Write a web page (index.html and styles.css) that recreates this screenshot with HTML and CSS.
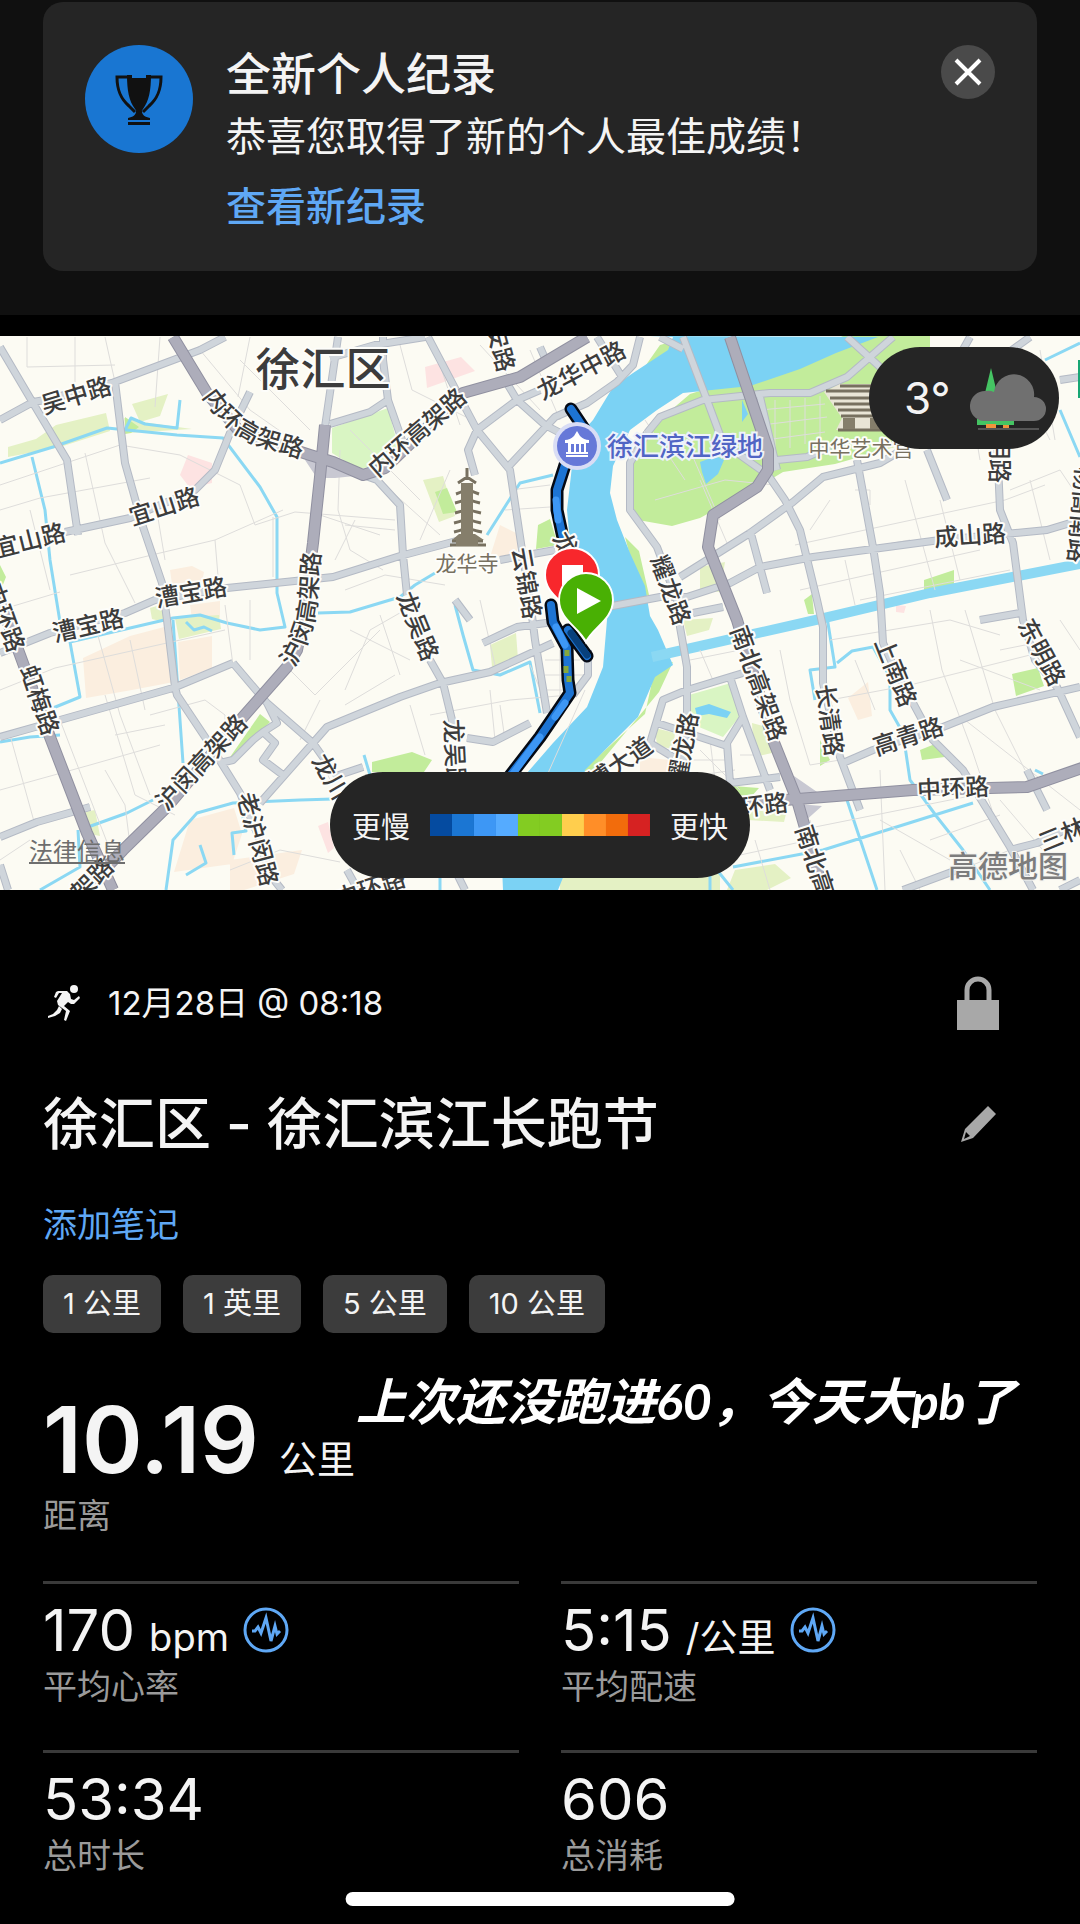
FILE: index.html
```html
<!DOCTYPE html>
<html lang="zh-CN">
<head>
    <meta charset="UTF-8">
    <meta name="viewport" content="width=device-width, initial-scale=1.0">
    <title>徐汇区 - 徐汇滨江长跑节</title>
    <link rel="stylesheet" href="styles.css">
</head>
<body>
    <section class="banner">
        <div class="record-card">
            <div class="trophy">
                <svg viewBox="0 0 108 108" aria-hidden="true">
                    <path d="M42 30h5v3h14v-3h5c0 15-2 26-8 34l-2 3h-4l-2-3c-6-8-8-19-8-34z"/>
                    <path class="handles" d="M45 32H32c0 14 4 22 12 29l6 6M63 32h13c0 14-4 22-12 29l-6 6"/>
                    <path d="M51 66h6c0 4 3 6 8 7v2H43v-2c5-1 8-3 8-7zM43 77h22v3H43z"/>
                </svg>
            </div>
            <div class="record-text">
                <h2>全新个人纪录</h2>
                <p>恭喜您取得了新的个人最佳成绩！</p>
                <a href="#records">查看新纪录</a>
            </div>
            <button class="close" type="button" aria-label="关闭">
                <svg viewBox="0 0 54 54"><path d="M15 15l24 24M39 15L15 39"/></svg>
            </button>
        </div>
    </section>

    <section class="map">
        <svg class="map-canvas" viewBox="0 336 1080 554">
            <rect class="land" x="0" y="336" width="1080" height="554"/>

            <!-- blocks -->
            <g class="built">
                <path d="M83 658l47-22 38-10 6 56-42 8-46 8zM178 642l34-6v32l-32 12zM170 570l22-4 12 6-2 10-30 2zM190 605l30-4v16l-28 2zM190 820l44-12 8 26-10 30-58 8zM230 860l72-10-8 24-50 16h-14zM500 525l20 10-4 20-26 2zM848 698l20-16 4 34-14 4zM640 757l30 3-6 30-24-10zM345 384l5-4z"/>
            </g>
            <g class="rosy">
                <path d="M188 455l24 8v20l-22 5-10-13zM425 367l36-10 14 14-48 17zM318 826l10-4 6 26-6 5zM896 605l10 1-2 7-8-1z"/>
            </g>
            <g class="pale-park">
                <path d="M8 447l28-8 20-14 50-12 4 18-50 16-52 10zM132 404l36-10-8 22-20 6zM124 418l18 4 50 7-66 4zM175 618l44-3 2 14-42 10zM85 812l10-2 5 26-10-2zM150 608l14-4v18l-12-3zM423 480l20-4 12 40-16 6zM490 645l26-12 2 26-26 8zM560 862l60 10-10 18h-50zM683 620l30-2-4 12-22 6zM752 723l22 6-2 24-18 4zM735 870l40-6 16 14-24 12h-40zM610 872h110v18H610zM700 567l25-5-5 30-20-2zM655 728l20 5-2 16-16-3zM738 808l48 6-2 8-36-2z"/>
            </g>
            <g class="park">
                <path d="M332 428l56-20 10 38-12 18-28 5-26-16zM689 695l42-12 10 32-18 22-36-15z"/>
            </g>
            <g class="green">
                <path d="M228 760l32-46 10 8-20 22-14 14zM125 417l14 10-8 6-6 1zM435 492l12-4 10 24-14 2zM538 525l12-6 8 26-22 4zM372 762l40-10 20 8-8 12h-52zM660 345l14-4-12 20-16 4zM625 537l14 14 10 44-8 2zM655 668l18-6-14 30-68 82-8-4 62-56zM924 580l30-10v16l-30 8zM1012 674l26-6 6 18-28 10zM920 750l20-8 12 14-30 4zM820 740l10 20-10 6zM804 600l8-6 2 20h-6zM0 565l6 12-6 15zM733 786l26 2-8 9-18-2z"/>
                <path d="M690 394l67-21 50-20 36-17h87v80l-25 28-70 20-52 8-20 12-63 34-28 8-34-6-8-22 4-38 16-27 20-22z"/>
            </g>

            <!-- water -->
            <path class="river" d="M650 336l23 1-5 13-35 23-20 14-20 33-18 20-8 70 3 33 17 27 21 30-1 20-4 47-16 40-34 36-26 30-27 47 3 70h55l12-30 15-90 53-53 17-40 18-12-15-35-8-14-5-30-15-33-13-33-7-27 3-27 17-36 27-20 26-17 67-7 50-17 36-16 42-16z"/>
            <path class="river" d="M700 462l16-6 8 4-6 14-12 10-4-12zM742 400l6 14-6 8zM695 708l14-4 22 8-4 6-18-4-12 2zM690 385l16-8 10 6-14 10z"/>
            <path class="canal" d="M652 657l88-20 80-18 110-26 155-30"/>
            <g class="streams">
                <path d="M0 463l53-16 54-19 70 7 46 3 37 49 17 30v76l8 34-25 3-33-7-27-8-27 3-103 24 10 55-27 11"/>
                <path d="M125 430l6-12 14 6 32 4 3-28M32 457l13 53 5 50 10 62M318 613l32-1 50-15 15-12 20-12M173 620l10 143M88 827l39-14 26-13M78 830l2 37-40 23M0 742l30-5 30-2M166 890l7-50 24-27 36-10 67-3 33-1M240 803l6 28-14 2 2 22M200 845l6 18-20 12M553 475l-33 8-33 52M455 605l8 30 10 35 27 5 30-13 10 51M827 617l8 50-25 3 5 30M837 663l15-12 21-4 17 30v33l13 23 7 47 27 37 26 33 27 40M733 867l90-17 150-47M847 800l30 90M1045 360l35-17M1060 410l20 47M1035 770l8 4M364 755l6 20M733 890l-24-30M440 860v30M186 622l8 8 10-3 8 4M710 875v15"/>
            </g>

            <!-- small streets -->
            <g class="lanes">
                <path d="M27 337v30l88-2M75 337v45M160 337l-5 70M200 350l50 60 50 35M250 337l-12 60M240 360l70 70M105 337l10 45M0 485l60-20 60-20 60 10 60 30 15 40 40-13 100 8M30 510l20 80M85 453l20 90 30 60M0 510l40-12 110-20M70 575l90-22 55-13 68-30M155 500l10 60M215 540l5 60M273 517v60M340 450l-2 60 12 40 33 20M320 515l60 20M355 520l-20 40"/>
                <path d="M0 610l60-18M0 690l55-22 170-38M95 625l25 90 30 80M130 640l15 70M60 720l50 130M105 695l30 100 40 20M10 735l25 90M150 715l55-15 20 15v30M115 735l50-10M105 770l20 35 5 40M0 790l90-25 70-20M225 605l8 60M250 600v60M290 670l25 25 65-65M345 705l50-30M300 740l20-40M0 860l30-20M230 870l50-20 60 12M380 615l20 60M410 705l15 50M320 755l12 30"/>
                <path d="M345 590l40-15 60 10M350 630l60 30M345 690l25-60 35-20M480 600l15 65M350 430l70 70M390 490l50 45M420 540l30-70M345 525l50 5M440 365l20 60M400 345l12 45 60 30M480 345l60 65M530 350l30 70M510 490l40-5M505 510l45-3M430 715l80-15 60-5M490 690l5 50M400 800l80-25M530 665l25 60M545 660h35M545 675h40M545 690h35M560 650v50M500 705l5 35M545 780l40-90"/>
                <path d="M760 410l65-6M762 425l65-8M765 440l60-8M775 400v50M790 400v48M805 398v46M820 396v42M655 500l70-20 50 5M690 450l30 70M700 480l30 70M645 420l40 60M795 545l70-15 140-30 40-15M800 560l110-20M800 590l180-40M830 500l-20 30M860 600l150-30M905 480l30 110M940 500l20 80M1010 490l50-20 20 30M1030 480l20 80M845 560l10 45M855 490h15v15M970 400l10 60M1020 380l30 60M1040 350l15 90"/>
                <path d="M780 650l10 50 20 65 30-5M830 640l120-20 50 15M830 700l80-15 140-35M855 660l20 50M930 610l12 60 30 80 20 60M965 610l30 100 30 60M880 770l5 120M810 820l10 60M800 830l100-20 150-30M960 870l50-20M900 850l20 40M1060 620l20 30M1000 650l50-10M960 660l80 30M700 650l15 35M690 660l50-10M700 750l40 40M690 760h40M700 775l35-5M710 740l5 40M750 740l20 60M740 755h20M755 840l15 50M740 855l70-15M965 720l115 90M1000 800l60 70M880 820l70 40M930 840l70-25"/>
            </g>

            <!-- main streets -->
            <g class="streets">
                <path id="st" d="M0 347l33 56 34 57 11 75M0 420l33-18 12-2 67-17 88-33 25-13M115 382l10 81 18 64 19 56 5 37 8 67 2 8 30 45 33 53 17 40 13 42 12 15M65 532l65-14 65-28 20-20 15-37 20-41M338 337l-13 90M330 424l40-12 18-12-5-40V337M388 400l14 40M330 358l45-13 50-8M428 337l49 93 33 40 12 80 8 50 5 40 12 73M477 430l-9 20 7 25M477 430l40-30 23-10M508 385l9 15 28 25 25 13M508 467l47-50 32-14 30-21 16-17 7-28M597 337l25 40M540 347l8 18M363 475l14 5 23 25 3 50 4 40M0 653l50-20 75-20 30-13 72-12 106-11 67-21 60-16M500 560l55-10M260 803l53-60 14-16 73-30 40-14 50-11 63-29M455 600l15 20M483 643l34-16 36-5M430 660l13 23 9 37v20M467 738l26 4 37-19M233 663l34 40 46 40 14 20M0 737l60-17 113-32 60-25M0 837l37-15 53-15M220 763l13-3 20-20 10-8 12 11-12 17 20 15M267 703l10 20-14 9M0 865l8 25M333 777l30-10M347 870l11 20M455 870l10 20M683 337l24 63 16 43 45 32 17 25 15 30 17 70 6 27v56l17 74 20 53M660 337l23 12M760 397l17 73M847 337l33 30M647 433l13-16 43-17 67-7h40l37-16 46-40M647 433l-17 30v47l27 37 20 53 3 27 7 40v46l-7 77M777 460l30-3 23-10M680 577l70-44 43-31 30-25 57-14 17-10M750 530l17 63M607 607l53-10 27 0 43-14 30-16 53-10 127-17 107-10 33-10M857 460l16 87 7 46 3 50 17 37 13 23 20 37 30 30 47 77 23 43M927 450l20 50M997 440l3 70 13 33 10 77 12 40 22 27 23 50M960 355l10-18M1005 355l25-18M1060 380l20-3M650 743l13-43 24-10 56-17M730 677l13 40 27 73M743 717l-16 26 3 40 50-6M657 723l70 23M650 743l23 14M980 620l40-7M843 763l30-13 70-23 50-20 87-20M1027 770l20 40M903 890l54-20M1010 850l27-7 43-20M1060 890l20-10M573 695l15-20v-25M693 613l30-6"/>
                <use href="#st"/>
            </g>

            <!-- elevated roads -->
            <path class="ramp" d="M305 460l12 18h18l20-2-30-22zM794 776l26 18-24 6zM798 804l24 2-18 16z"/>
            <g class="highways">
                <path id="hw" d="M173 337l34 56 33 39 70 23 23 7 30 13 22-7 78-75 57-16 67-40M325 425l-5 52-7 66-10 77-6 30-10 17-44 50-76 90-44 43-38 40M-8 580l28 75 30 82 37 96 26 57M730 337l38 113v20l-11 17-44 28-5 32 29 73 36 120 24 60 26 90M660 816l125-16 128-10 114-3 55-19"/>
                <use href="#hw"/>
            </g>

            <!-- landmarks -->
            <g class="pagoda">
                <path d="M467 468v12M458 483l9-6 9 6M456 494q11-4 11-7 0 3 12 7M455 503q12-3 12-6 0 3 13 6M455 513q12-3 12-6 0 3 14 6M454 523q13-3 13-6 0 3 14 6M454 532q13-3 13-6 0 3 15 6M452 541h31M450 545h36"/>
                <path class="solid" d="M461 483h12v55h-12zM452 540l7-6h16l9 6zM456 540h22v6h-22z"/>
            </g>
            <g class="palace">
                <path class="backing" d="M840 384h60v46h-64l6-12-18-26z"/>
                <path d="M840 386h60M826 391h70M830 398h66M834 404h60M838 410h60M841 416h60M838 430h60"/>
                <path class="solid" d="M843 418h12v11h-12zM870 418h12v11h-12z"/>
            </g>

            <!-- street names -->
            <g class="names">
                <text class="district" transform="translate(323 370)" dy="16">徐汇区</text>
                <text transform="translate(76 395) rotate(-17)" dy="9">吴中路</text>
                <text transform="translate(164 506) rotate(-18)" dy="9">宜山路</text>
                <text transform="translate(30 540) rotate(-14)" dy="9">宜山路</text>
                <text transform="translate(191 592) rotate(-10)" dy="9">漕宝路</text>
                <text transform="translate(88 625) rotate(-13)" dy="9">漕宝路</text>
                <path id="inner-ring" fill="none" d="M202 396q26 40 58 50 30 9 58 18"/>
                <text class="along"><textPath href="#inner-ring">内环高架路</textPath></text>
                <path id="humin" fill="none" d="M294 668q18-30 22-60 2-34 6-68"/>
                <text class="along"><textPath href="#humin">沪闵高架路</textPath></text>
                <text transform="translate(417 432) rotate(-41)" dy="9">内环高架路</text>
                <text transform="translate(201 762) rotate(-47)" dy="9">沪闵高架路</text>
                <text transform="translate(92 879) rotate(-45)" dy="9">架路</text>
                <text transform="translate(40 700) rotate(71)" dy="9">虹梅路</text>
                <text transform="translate(5 617) rotate(70)" dy="9">中环路</text>
                <text transform="translate(258 839) rotate(75)" dy="9">老沪闵路</text>
                <text transform="translate(337 787) rotate(60)" dy="9">龙川路</text>
                <text transform="translate(418 626) rotate(68)" dy="9">龙吴路</text>
                <text transform="translate(455 755) rotate(87)" dy="9">龙吴路</text>
                <text transform="translate(501 348) rotate(75)" dy="9">安路</text>
                <text transform="translate(581 370) rotate(-28)" dy="9">龙华中路</text>
                <text transform="translate(527 583) rotate(80)" dy="9">云锦路</text>
                <text transform="translate(671 590) rotate(70)" dy="9">耀龙路</text>
                <text transform="translate(683 748) rotate(-80)" dy="9">耀龙路</text>
                <text transform="translate(620 763) rotate(-35)" dy="9">博大道</text>
                <text transform="translate(1000 459) rotate(90)" dy="9">明路</text>
                <text transform="translate(970 535) rotate(-4)" dy="9">成山路</text>
                <text transform="translate(1081 515) rotate(95)" dy="9">杨高南路</text>
                <text transform="translate(896 672) rotate(68)" dy="9">上南路</text>
                <text transform="translate(830 720) rotate(82)" dy="9">长清路</text>
                <text transform="translate(1042 652) rotate(62)" dy="9">东明路</text>
                <text transform="translate(759 683) rotate(70)" dy="9">南北高架路</text>
                <text transform="translate(815 860) rotate(72)" dy="9">南北高</text>
                <text transform="translate(908 736) rotate(-18)" dy="9">高青路</text>
                <text transform="translate(953 788) rotate(-3)" dy="9">中环路</text>
                <text transform="translate(752 806) rotate(-7)" dy="9">中环路</text>
                <text transform="translate(1073 830) rotate(-22)" dy="9">三林路</text>
                <text transform="translate(370 888) rotate(-18)" dy="9">中环路</text>
                <text class="place" x="467" y="571">龙华寺</text>
                <text class="place" x="861" y="456">中华艺术宫</text>
            </g>

            <!-- route -->
            <g class="route">
                <path id="rt" d="M571 409l14 21-20 35-8 25v20l6 28M551 605l2 17 14 26 1 32 2 13-30 44-34 44M568 630l19 26"/>
                <use href="#rt" class="route-line"/>
                <path class="route-mid" d="M556 500l2 20M556 627l9 18M565 703l-10 14M540 737l-28 38"/>
                <path class="route-slow" d="M571 633l16 22"/>
                <path class="route-fast" d="M567 650v6M566 666v7M569 676v6"/>
            </g>
            <g class="names">
                <text transform="translate(566 544) rotate(60)" dy="9">龙</text>
            </g>

            <circle class="poi-halo" cx="577" cy="446" r="24"/>
            <circle class="poi" cx="577" cy="446" r="20"/>
            <path class="poi-glyph" d="M577 431l3 5q4 4 9 4v3h-3v9h2v2h-22v-2h2v-9h-3v-3q5 0 9-4zM571 444v8h3v-8zM576 444v8h3v-8zM581 444v8h3v-8zM566 455h22v2h-22z"/>
            <text class="poi-name" x="685" y="456">徐汇滨江绿地</text>

            <path class="pin-stop" d="M572 617c-6-16-27-22-27-42a27 27 0 0 1 54 0c0 20-21 26-27 42z"/>
            <path class="pin-glyph" d="M562 565h21v20h-21z"/>
            <path class="pin-start" d="M586 642c-6-14-27-22-27-42a27 27 0 0 1 54 0c0 20-21 28-27 42z"/>
            <path class="pin-glyph" d="M577 588l24 13-24 13z"/>
            <rect class="edge-sign" x="1078" y="360" width="4" height="38"/>

            <text class="provider" x="1008" y="877">高德地图</text>
        </svg>

        <div class="weather">
            <span>3°</span>
            <svg viewBox="0 0 78 64" aria-hidden="true">
                <path class="tree" d="M22 2l6 25H16zM8 53h37v6H8z"/>
                <path class="trunk" d="M17 58h10v4H17zM34 59h6v3h-6z"/>
                <path class="ground" d="M9 63h61"/>
                <path class="cloud" d="M15 55a15 15 0 0 1 2-30 14 14 0 0 1 8 1 20 20 0 0 1 40 5 12 12 0 0 1 0 24z"/>
            </svg>
        </div>
        <div class="legend">
            <span>更慢</span>
            <div class="scale">
                <i class="s1"></i><i class="s2"></i><i class="s3"></i><i class="s4"></i><i class="s5"></i><i class="s5"></i><i class="s6"></i><i class="s7"></i><i class="s8"></i><i class="s9"></i>
            </div>
            <span>更快</span>
        </div>
        <a class="legal" href="#legal">法律信息</a>
    </section>

    <main class="details">
        <div class="date-row">
            <svg class="runner" viewBox="0 0 36 38" aria-hidden="true">
                <circle cx="27" cy="5" r="4"/>
                <path d="M9 8l2-1h9l3 3 1 5 3 1 5-4 1 2-6 6h-3l-3-2-4 4 6 5-4 10-2-1 2-9-8-6-1-4 5-8h-3l-3 5-2-1z"/>
                <path d="M12 22l3 3-2 4-5 3-7 2 0-2 5-2 4-4z"/>
            </svg>
            <span>12月28日 @ 08:18</span>
            <button class="icon-button" type="button" aria-label="隐私">
                <svg viewBox="0 0 42 54"><path d="M0 24h42v30H0z"/><path class="shackle" d="M10 25V14a11 11 0 0 1 22 0v11"/></svg>
            </button>
        </div>

        <div class="title-row">
            <h1>徐汇区 - 徐汇滨江长跑节</h1>
            <button class="icon-button" type="button" aria-label="编辑">
                <svg viewBox="0 0 42 54"><path d="M31 9l8 8-23 24-12 4 4-13zM9 35l-2 7 6-3z" fill-rule="evenodd"/></svg>
            </button>
        </div>

        <a class="add-note" href="#note">添加笔记</a>

        <ul class="chips">
            <li>1 公里</li>
            <li>1 英里</li>
            <li>5 公里</li>
            <li>10 公里</li>
        </ul>

        <div class="distance">
            <p class="distance-value">10.19<small>公里</small></p>
            <p class="label">距离</p>
            <p class="caption">上次还没跑进60，今天大pb了</p>
        </div>

        <div class="stats">
            <div class="stat">
                <p class="value">170 <small>bpm</small>
                    <svg viewBox="0 0 46 46" aria-hidden="true"><circle cx="23" cy="23" r="21"/><path d="M9 24h3l3-4 3 6 5-15 5 23 4-15 2 8 3-3"/></svg>
                </p>
                <p class="label">平均心率</p>
            </div>
            <div class="stat">
                <p class="value">5:15 <small>/公里</small>
                    <svg viewBox="0 0 46 46" aria-hidden="true"><circle cx="23" cy="23" r="21"/><path d="M9 24h3l3-4 3 6 5-15 5 23 4-15 2 8 3-3"/></svg>
                </p>
                <p class="label">平均配速</p>
            </div>
            <div class="stat">
                <p class="value">53:34</p>
                <p class="label">总时长</p>
            </div>
            <div class="stat">
                <p class="value">606</p>
                <p class="label">总消耗</p>
            </div>
        </div>
    </main>
    <div class="home-bar"></div>
</body>
</html>
```

FILE: styles.css
```css
* {
    margin: 0;
    padding: 0;
    box-sizing: border-box;
}

body {
    font-family: Inter, "Noto Sans CJK SC", sans-serif;
    background-color: #000;
    color: #f4f4f4;
}

svg {
    display: block;
}

a {
    color: #5fa8f5;
    text-decoration: none;
}

button {
    border: none;
    background: none;
    cursor: pointer;
}

/* record banner */
.banner {
    background-color: #101010;
    padding: 2px 43px 44px;
}

.record-card {
    display: flex;
    align-items: flex-start;
    gap: 33px;
    padding: 43px 42px 39px;
    border-radius: 20px;
    background-color: #252525;
}

.trophy {
    width: 108px;
    height: 108px;
    border-radius: 50%;
    background-color: #1976d2;
    fill: #111;
}

.trophy .handles {
    fill: none;
    stroke: #111;
    stroke-width: 3px;
}

.record-text {
    flex: 1;
}

.record-text h2 {
    font-size: 45px;
    font-weight: 500;
    line-height: 60px;
}

.record-text p {
    font-size: 40px;
    line-height: 50px;
    margin-top: 7px;
}

.record-text a {
    display: inline-block;
    font-size: 40px;
    font-weight: 500;
    line-height: 50px;
    margin-top: 20px;
}

.close {
    width: 54px;
    height: 54px;
    border-radius: 50%;
    background-color: #4a4a4a;
}

.close path {
    stroke: #fff;
    stroke-width: 4px;
}

/* map */
.map {
    position: relative;
    margin-top: 21px;
}

.map-canvas {
    width: 100%;
    height: auto;
}

.land { fill: #fcfbf3; }
.built { fill: #fbeedf; }
.rosy { fill: #fde3e2; }
.park { fill: #d9f5c3; }
.pale-park { fill: #e4f1c4; }
.green { fill: #c2ec9b; }
.river { fill: #7bd2f4; }
.ramp { fill: #c8c8d2; }

.canal,
.streams,
.lanes,
.streets,
.highways {
    fill: none;
    stroke-linejoin: round;
}

.canal {
    stroke: #8bd8f3;
    stroke-width: 10px;
}

.streams {
    stroke: #8bd8f3;
    stroke-width: 3px;
}

.lanes {
    stroke: #dedddb;
    stroke-width: 1px;
}

/* the edge colour sits on the group, the fill is drawn over it */
.streets #st {
    stroke: var(--line, #b4bac5);
    stroke-width: var(--line-width, 8px);
}

.streets use {
    --line: #cfd5db;
    --line-width: 6px;
}

.highways #hw {
    stroke: var(--line, #9090a0);
    stroke-width: var(--line-width, 12px);
}

.highways use {
    --line: #adadba;
    --line-width: 10px;
}

.pagoda,
.palace {
    fill: none;
    stroke: #77705f;
    stroke-width: 3px;
}

.pagoda .solid,
.palace .solid {
    fill: #857e6b;
    stroke: none;
}

.palace .backing {
    fill: #e9e5d6;
    stroke: none;
}

.names text {
    font-size: 24px;
    font-weight: 500;
    text-anchor: middle;
    fill: #3c3c3c;
    stroke: #fdfdfa;
    stroke-width: 4px;
    stroke-linejoin: round;
    paint-order: stroke;
}

.names .along {
    text-anchor: start;
}

.names .district {
    font-size: 45px;
}

.names .place {
    font-size: 21px;
    font-weight: 400;
    fill: #77705f;
}

.route {
    fill: none;
    stroke-linecap: round;
    stroke-linejoin: round;
}

.route #rt {
    stroke: var(--line, #050a14);
    stroke-width: var(--line-width, 13px);
}

.route-line {
    --line: #1d74d3;
    --line-width: 8px;
}

.route-mid {
    stroke: #3d97f5;
    stroke-width: 7px;
}

.route-slow {
    stroke: #08407c;
    stroke-width: 7px;
}

.route-fast {
    stroke: #86a83c;
    stroke-width: 5px;
    stroke-linecap: butt;
}

.poi-halo { fill: #d9ddf5; }
.poi { fill: #6678d8; }
.poi-glyph { fill: #fff; fill-rule: evenodd; }

.poi-name {
    font-size: 26px;
    font-weight: 500;
    text-anchor: middle;
    fill: #5165c4;
    stroke: #eef2fb;
    stroke-width: 4px;
    paint-order: stroke;
}

.pin-stop,
.pin-start {
    fill: #f8272c;
    stroke: #fff;
    stroke-width: 2px;
}

.pin-start { fill: #49b004; }
.pin-glyph { fill: #fff; }
.edge-sign { fill: #17a673; }

.provider {
    font-size: 30px;
    font-weight: 500;
    text-anchor: middle;
    fill: #7d7d7d;
    stroke: #f4f4f0;
    stroke-width: 2px;
    paint-order: stroke;
}

.weather {
    position: absolute;
    top: 11px;
    right: 21px;
    display: flex;
    align-items: center;
    justify-content: space-between;
    width: 190px;
    height: 102px;
    padding: 0 12px 0 35px;
    border-radius: 51px;
    background-color: #252525;
    font-size: 44px;
}

.weather svg {
    width: 78px;
    height: 64px;
}

.tree { fill: #45c463; }
.trunk { fill: #f2933c; }
.ground { stroke: #555; stroke-width: 2px; }
.cloud { fill: #707070; }

.legend {
    position: absolute;
    bottom: 12px;
    left: 50%;
    transform: translateX(-50%);
    display: flex;
    align-items: center;
    gap: 20px;
    height: 106px;
    padding: 0 22px;
    border-radius: 53px;
    background-color: #252525;
    font-size: 29px;
    white-space: nowrap;
}

.scale {
    display: flex;
}

.scale i {
    width: 22px;
    height: 22px;
}

.s1 { background-color: #054ba0; }
.s2 { background-color: #1b76d3; }
.s3 { background-color: #3d97f5; }
.s4 { background-color: #55abff; }
.s5 { background-color: #83cc22; }
.s6 { background-color: #ffce4d; }
.s7 { background-color: #ff8e28; }
.s8 { background-color: #f26c0c; }
.s9 { background-color: #d62222; }

.legal {
    position: absolute;
    left: 29px;
    bottom: 22px;
    font-size: 24px;
    line-height: 32px;
    color: #6e6e6e;
    text-decoration: underline;
}

/* activity details */
.details {
    padding: 86px 43px 0;
}

.date-row,
.title-row {
    display: flex;
    align-items: center;
    padding-right: 38px;
}

.date-row span {
    flex: 1;
    font-size: 33px;
    line-height: 50px;
}

.runner {
    width: 36px;
    height: 38px;
    margin: 0 25px 0 4px;
    fill: #f4f4f4;
}

.icon-button svg {
    width: 42px;
    height: 54px;
    fill: #a8a8a8;
}

.icon-button .shackle {
    fill: none;
    stroke: #a8a8a8;
    stroke-width: 5px;
}

.title-row {
    margin-top: 54px;
}

.title-row h1 {
    flex: 1;
    font-size: 56px;
    font-weight: 500;
    line-height: 80px;
}

.add-note {
    display: block;
    margin-top: 36px;
    font-size: 34px;
    line-height: 50px;
}

.chips {
    display: flex;
    gap: 22px;
    margin-top: 25px;
    list-style: none;
}

.chips li {
    padding: 0 20px;
    border-radius: 10px;
    background-color: #3c3c3c;
    font-size: 29px;
    line-height: 58px;
}

.distance {
    position: relative;
    margin: 62px 0 40px;
}

.distance-value {
    display: flex;
    align-items: baseline;
    gap: 20px;
    font-size: 92px;
    font-weight: 600;
    line-height: 90px;
}

.distance-value small {
    font-size: 38px;
    font-weight: 400;
    line-height: 40px;
}

.label {
    font-size: 34px;
    line-height: 50px;
    color: #9a9a9a;
}

.distance .label {
    margin-top: 6px;
}

.caption {
    position: absolute;
    top: -24px;
    left: 313px;
    font-family: Lato, "Noto Sans CJK SC", sans-serif;
    font-size: 50px;
    font-weight: 700;
    font-style: italic;
    line-height: 60px;
    white-space: nowrap;
    color: #fff;
}

.stats {
    display: grid;
    grid-template-columns: 1fr 1fr;
    column-gap: 42px;
}

.stat {
    border-top: 3px solid #3a3a3a;
    padding: 16px 0 38px;
}

.value {
    display: flex;
    align-items: baseline;
    gap: 14px;
    margin-bottom: 2px;
    font-size: 58px;
    line-height: 60px;
}

.value small {
    font-size: 38px;
    line-height: 40px;
}

.value svg {
    align-self: center;
    width: 46px;
    height: 46px;
    fill: none;
    stroke: #5fa8f5;
    stroke-width: 3px;
}

.home-bar {
    position: fixed;
    bottom: 18px;
    left: 50%;
    transform: translateX(-50%);
    width: 36%;
    height: 14px;
    border-radius: 7px;
    background-color: #fff;
}
```
